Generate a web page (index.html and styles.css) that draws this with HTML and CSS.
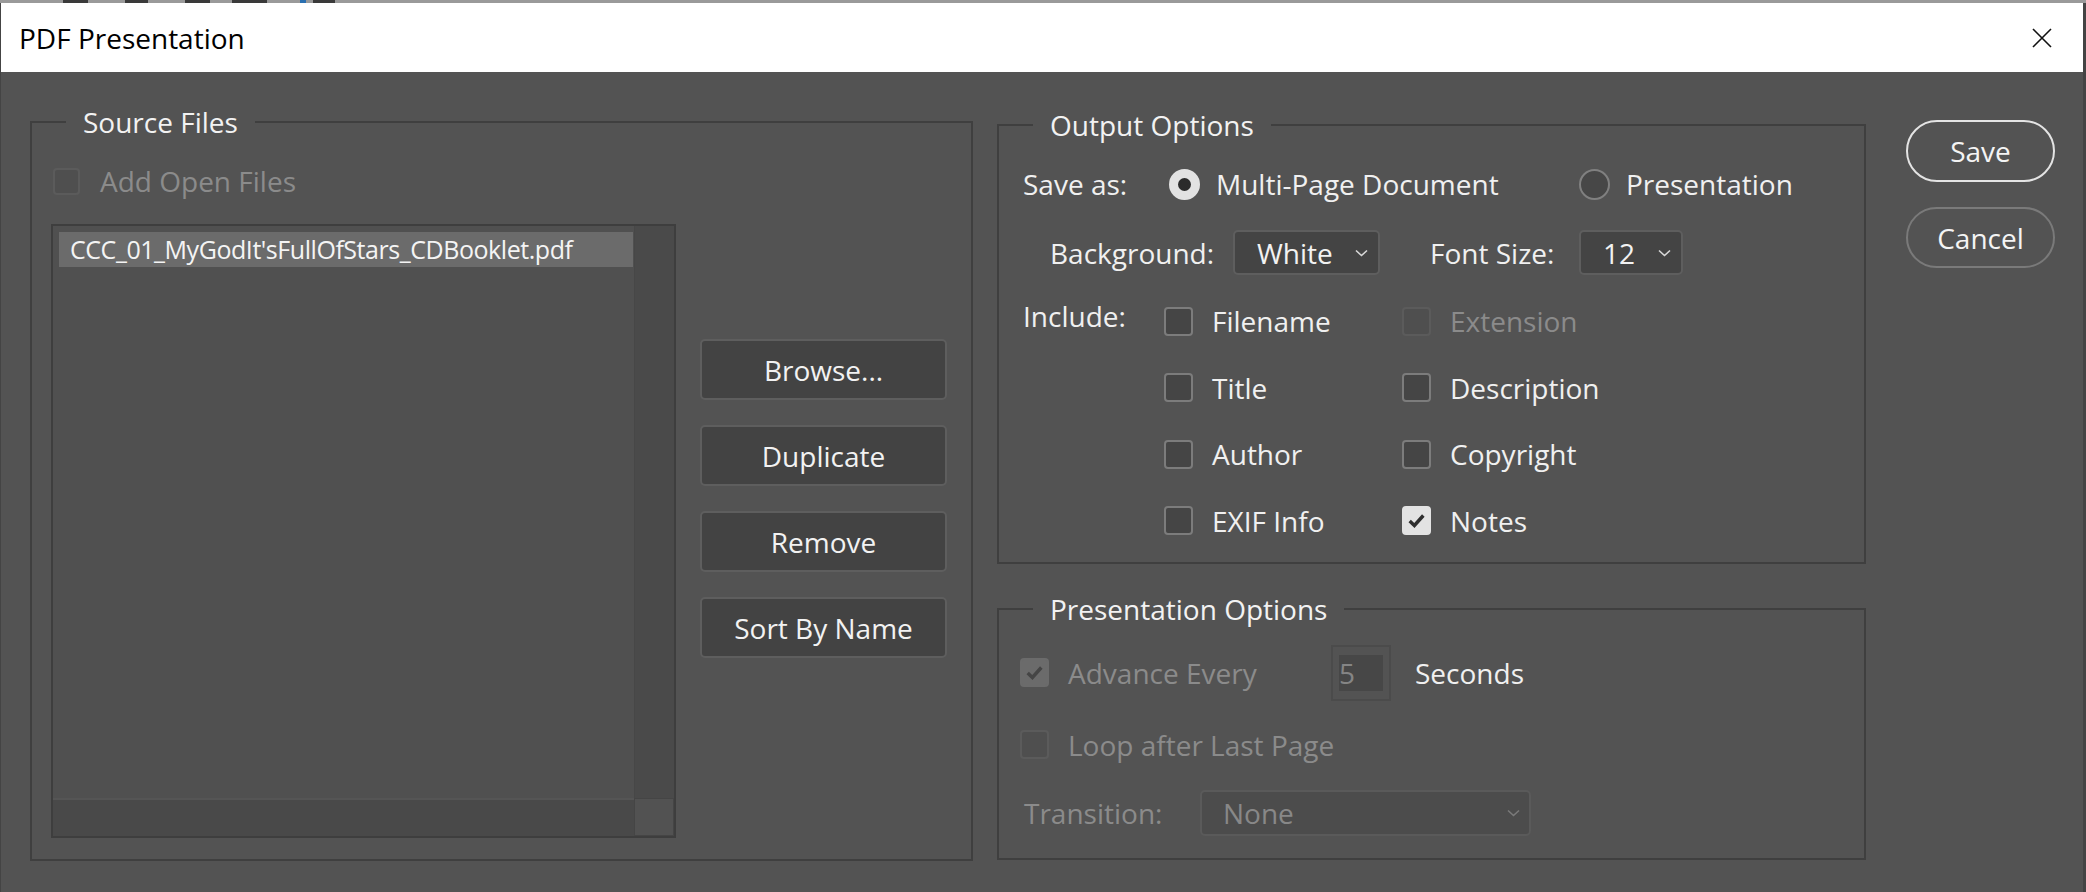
FILE: index.html
```html
<!DOCTYPE html>
<html lang="en">
<head>
<meta charset="utf-8">
<title>PDF Presentation</title>
<link rel="stylesheet" href="styles.css">
</head>
<body>
<div class="topstrip"></div>
<div class="dialog">
  <div class="titlebar">
    <span class="title">PDF Presentation</span>
    <svg class="close" width="20" height="20" viewBox="0 0 20 20"><path d="M1 1 L19 19 M19 1 L1 19" stroke="#111" stroke-width="1.6" fill="none"/></svg>
  </div>
  <div class="content">
    <fieldset class="group group-src">
      <legend>Source Files</legend>
      <div class="src-inner">
        <div class="row">
          <span class="cb cb-src disabled"></span>
          <span class="lbl dim">Add Open Files</span>
        </div>
        <div class="src-main">
          <div class="listbox">
            <div class="list-area">
              <div class="list-item">CCC_01_MyGodIt'sFullOfStars_CDBooklet.pdf</div>
            </div>
            <div class="vscroll"></div>
            <div class="hscroll"></div>
            <div class="corner"></div>
          </div>
          <div class="btn-col">
            <div class="btn">Browse...</div>
            <div class="btn">Duplicate</div>
            <div class="btn">Remove</div>
            <div class="btn">Sort By Name</div>
          </div>
        </div>
      </div>
    </fieldset>

    <div class="right">
      <fieldset class="group group-out">
        <legend>Output Options</legend>
        <div class="out-inner">
          <div class="row">
            <span class="lbl w-saveas">Save as:</span>
            <span class="radio-opt first"><span class="radio on"></span><span class="lbl">Multi-Page Document</span></span>
            <span class="radio-opt"><span class="radio"></span><span class="lbl">Presentation</span></span>
          </div>
          <div class="row row-bg">
            <span class="lbl w-bg">Background:</span>
            <span class="select sel-white"><span>White</span><svg width="13" height="8" viewBox="0 0 13 8"><path d="M1 1.5 L6.5 6.5 L12 1.5" stroke="#d8d8d8" stroke-width="1.6" fill="none"/></svg></span>
            <span class="lbl w-fs">Font Size:</span>
            <span class="select sel-12"><span>12</span><svg width="13" height="8" viewBox="0 0 13 8"><path d="M1 1.5 L6.5 6.5 L12 1.5" stroke="#d8d8d8" stroke-width="1.6" fill="none"/></svg></span>
          </div>
          <div class="include">
            <span class="lbl inc-lbl">Include:</span>
            <span class="opt"><span class="cb"></span><span class="lbl">Filename</span></span>
            <span class="opt"><span class="cb disabled"></span><span class="lbl dim">Extension</span></span>
            <span class="opt col2"><span class="cb"></span><span class="lbl">Title</span></span>
            <span class="opt"><span class="cb"></span><span class="lbl">Description</span></span>
            <span class="opt col2"><span class="cb"></span><span class="lbl">Author</span></span>
            <span class="opt"><span class="cb"></span><span class="lbl">Copyright</span></span>
            <span class="opt col2"><span class="cb"></span><span class="lbl">EXIF Info</span></span>
            <span class="opt"><span class="cb checked"><svg class="tick" width="21" height="21" viewBox="0 0 16 16"><path d="M2.8 8.4 L6.4 11.8 L13.2 4.2" stroke="#2e2e2e" stroke-width="2.6" fill="none"/></svg></span><span class="lbl">Notes</span></span>
          </div>
        </div>
      </fieldset>

      <fieldset class="group group-pres">
        <legend>Presentation Options</legend>
        <div class="pres-inner">
          <div class="row row-adv">
            <span class="cb checked disabled"><svg class="tick" width="21" height="21" viewBox="0 0 16 16"><path d="M2.8 8.4 L6.4 11.8 L13.2 4.2" stroke="#454545" stroke-width="2.6" fill="none"/></svg></span>
            <span class="lbl dim w-adv">Advance Every</span>
            <span class="field"><span class="field-in">5</span></span>
            <span class="lbl secs">Seconds</span>
          </div>
          <div class="row row-loop">
            <span class="cb disabled"></span>
            <span class="lbl dim">Loop after Last Page</span>
          </div>
          <div class="row row-trans">
            <span class="lbl dim w-trans">Transition:</span>
            <span class="select sel-none"><span>None</span><svg width="13" height="8" viewBox="0 0 13 8"><path d="M1 1.5 L6.5 6.5 L12 1.5" stroke="#7a7a7a" stroke-width="1.6" fill="none"/></svg></span>
          </div>
        </div>
      </fieldset>
    </div>

    <div class="action-col">
      <div class="pill pill-save">Save</div>
      <div class="pill pill-cancel">Cancel</div>
    </div>
  </div>
</div>
</body>
</html>
```
FILE: styles.css
```css
* { box-sizing: border-box; }

html, body {
  margin: 0;
  padding: 0;
}

body {
  width: 2086px;
  height: 892px;
  overflow: hidden;
  background: #444444;
  font-family: "Open Sans", "Noto Sans", sans-serif;
  color: #f0f0f0;
}

.topstrip {
  height: 3px;
  background: linear-gradient(90deg, #9a9a9a 0, #9a9a9a 63px, #3a3a3a 63px, #3a3a3a 88px, #9a9a9a 88px, #9a9a9a 125px, #3a3a3a 125px, #3a3a3a 148px, #9a9a9a 148px, #9a9a9a 185px, #3a3a3a 185px, #3a3a3a 210px, #9a9a9a 210px, #9a9a9a 232px, #3a3a3a 232px, #3a3a3a 267px, #9a9a9a 267px, #9a9a9a 300px, #2a6fb0 300px, #2a6fb0 306px, #9a9a9a 306px, #9a9a9a 313px, #3a3a3a 313px, #3a3a3a 335px, #9a9a9a 335px);
}

.dialog {
  margin-left: 1px;
  width: 2082px;
  height: 889px;
  background: #535353;
}

.titlebar {
  height: 69px;
  background: #ffffff;
  display: flex;
  align-items: center;
  justify-content: space-between;
  padding: 0 31px 0 18px;
}

.title {
  font-size: 28px;
  color: #000000;
}

.close { display: block; }

.content {
  display: flex;
  align-items: flex-start;
  padding: 31px 0 0 29px;
}

.group {
  margin: 0;
  padding: 0;
  border: 2px solid #3f3f3f;
  min-width: 0;
}

.group legend {
  margin-left: 34px;
  padding: 0 17px;
  font-size: 28px;
  line-height: 38px;
  color: #f2f2f2;
}

.lbl {
  font-size: 28px;
  line-height: 38px;
  white-space: nowrap;
}

.dim { color: #8b8b8b; }

.row {
  display: flex;
  align-items: center;
  height: 38px;
}

/* checkboxes */
.cb {
  flex: none;
  width: 29px;
  height: 29px;
  border: 2px solid #7c7c7c;
  border-radius: 4px;
  background: #454545;
  display: flex;
  align-items: center;
  justify-content: center;
}
.cb.disabled {
  border-color: #5b5b5b;
  background: #4f4f4f;
}
.cb.checked {
  border-color: #e3e3e3;
  background: #e3e3e3;
}
.cb.checked.disabled {
  border-color: #6b6b6b;
  background: #6b6b6b;
}
.tick { display: block; flex: none; }

/* source files */
.group-src { width: 943px; }

.src-inner { padding: 21px 0 21px 19px; }

.cb-src {
  width: 27px;
  height: 27px;
  margin-left: 2px;
  margin-right: 20px;
}

.src-main {
  display: flex;
  align-items: flex-start;
  gap: 24px;
  margin-top: 24px;
}

.listbox {
  width: 625px;
  height: 614px;
  border: 2px solid #3e3e3e;
  background: #505050;
  display: grid;
  grid-template-columns: 1fr 40px;
  grid-template-rows: 1fr 38px;
}

.list-area { padding: 6px 1px 0 6px; }

.list-item {
  height: 35px;
  background: #6b6b6b;
  padding-left: 11px;
  font-size: 25px;
  letter-spacing: -0.45px;
  line-height: 35px;
  color: #f4f4f4;
  white-space: nowrap;
  overflow: hidden;
}

.vscroll { background: #4a4a4a; border-left: 1px solid #474747; }
.hscroll { background: #494949; border-top: 2px solid #555555; }
.corner { background: #525252; border: 1px solid #454545; }

.btn-col {
  display: flex;
  flex-direction: column;
  gap: 25px;
  padding-top: 115px;
}

.btn {
  width: 247px;
  height: 61px;
  background: #434343;
  border: 2px solid #5e5e5e;
  border-radius: 5px;
  display: flex;
  align-items: center;
  justify-content: center;
  font-size: 28px;
  color: #f2f2f2;
}

/* right column */
.right {
  width: 869px;
  margin-left: 24px;
  margin-top: 3px;
  display: flex;
  flex-direction: column;
  gap: 26px;
}

.out-inner { padding: 21px 0 22px 24px; }

.w-saveas { width: 146px; }

.radio-opt {
  display: flex;
  align-items: center;
  gap: 16px;
}
.radio-opt.first { width: 410px; }

.radio {
  flex: none;
  width: 31px;
  height: 31px;
  border-radius: 50%;
  border: 2px solid #808080;
  background: #474747;
  display: flex;
  align-items: center;
  justify-content: center;
}
.radio.on {
  border-color: #e2e2e2;
  background: #e2e2e2;
}
.radio.on::after {
  content: "";
  width: 13px;
  height: 13px;
  border-radius: 50%;
  background: #2b2b2b;
}

.row-bg {
  height: 45px;
  margin-top: 27px;
  padding-left: 27px;
}

.w-bg { width: 183px; }
.w-fs { width: 149px; margin-left: 50px; }

.select {
  height: 45px;
  background: #444444;
  border: 2px solid #5e5e5e;
  border-radius: 5px;
  display: flex;
  align-items: center;
  justify-content: space-between;
  padding: 0 10px 0 22px;
  font-size: 28px;
  line-height: 38px;
  color: #f2f2f2;
}
.sel-white { width: 147px; }
.sel-12 { width: 104px; }

.include {
  display: grid;
  grid-template-columns: 141px 238px auto;
  row-gap: 28.5px;
  margin-top: 27px;
}

.inc-lbl { margin-top: -5px; }

.opt {
  display: flex;
  align-items: center;
  gap: 19px;
  height: 38px;
}
.opt.col2 { grid-column: 2; }

/* presentation options */
.pres-inner { padding: 17px 0 22px 21px; }

.row-adv { height: 56px; }
.row-adv .cb { margin-right: 19px; }
.w-adv { width: 263px; }

.field {
  width: 60px;
  height: 56px;
  border: 2px solid #4b4b4b;
  padding: 8px 6px;
  display: flex;
}
.field-in {
  flex: 1;
  background: #474747;
  font-size: 28px;
  line-height: 36px;
  color: #858585;
}
.secs { margin-left: 24px; }

.row-loop { margin-top: 25px; }
.row-loop .cb { margin-right: 19px; }

.row-trans {
  height: 46px;
  margin-top: 26px;
}
.w-trans { width: 180px; padding-left: 4px; }

.sel-none {
  width: 331px;
  height: 46px;
  background: #4c4c4c;
  border-color: #5a5a5a;
  padding: 0 9px 0 21px;
  color: #888888;
}

/* action buttons */
.action-col {
  display: flex;
  flex-direction: column;
  gap: 25px;
  margin-left: 40px;
  margin-top: 17px;
}

.pill {
  width: 149px;
  height: 62px;
  border-radius: 31px;
  display: flex;
  align-items: center;
  justify-content: center;
  font-size: 28px;
  color: #f4f4f4;
}
.pill-save { border: 2.5px solid #e4e4e4; }
.pill-cancel { border: 2.5px solid #7a7a7a; height: 61px; }
```
